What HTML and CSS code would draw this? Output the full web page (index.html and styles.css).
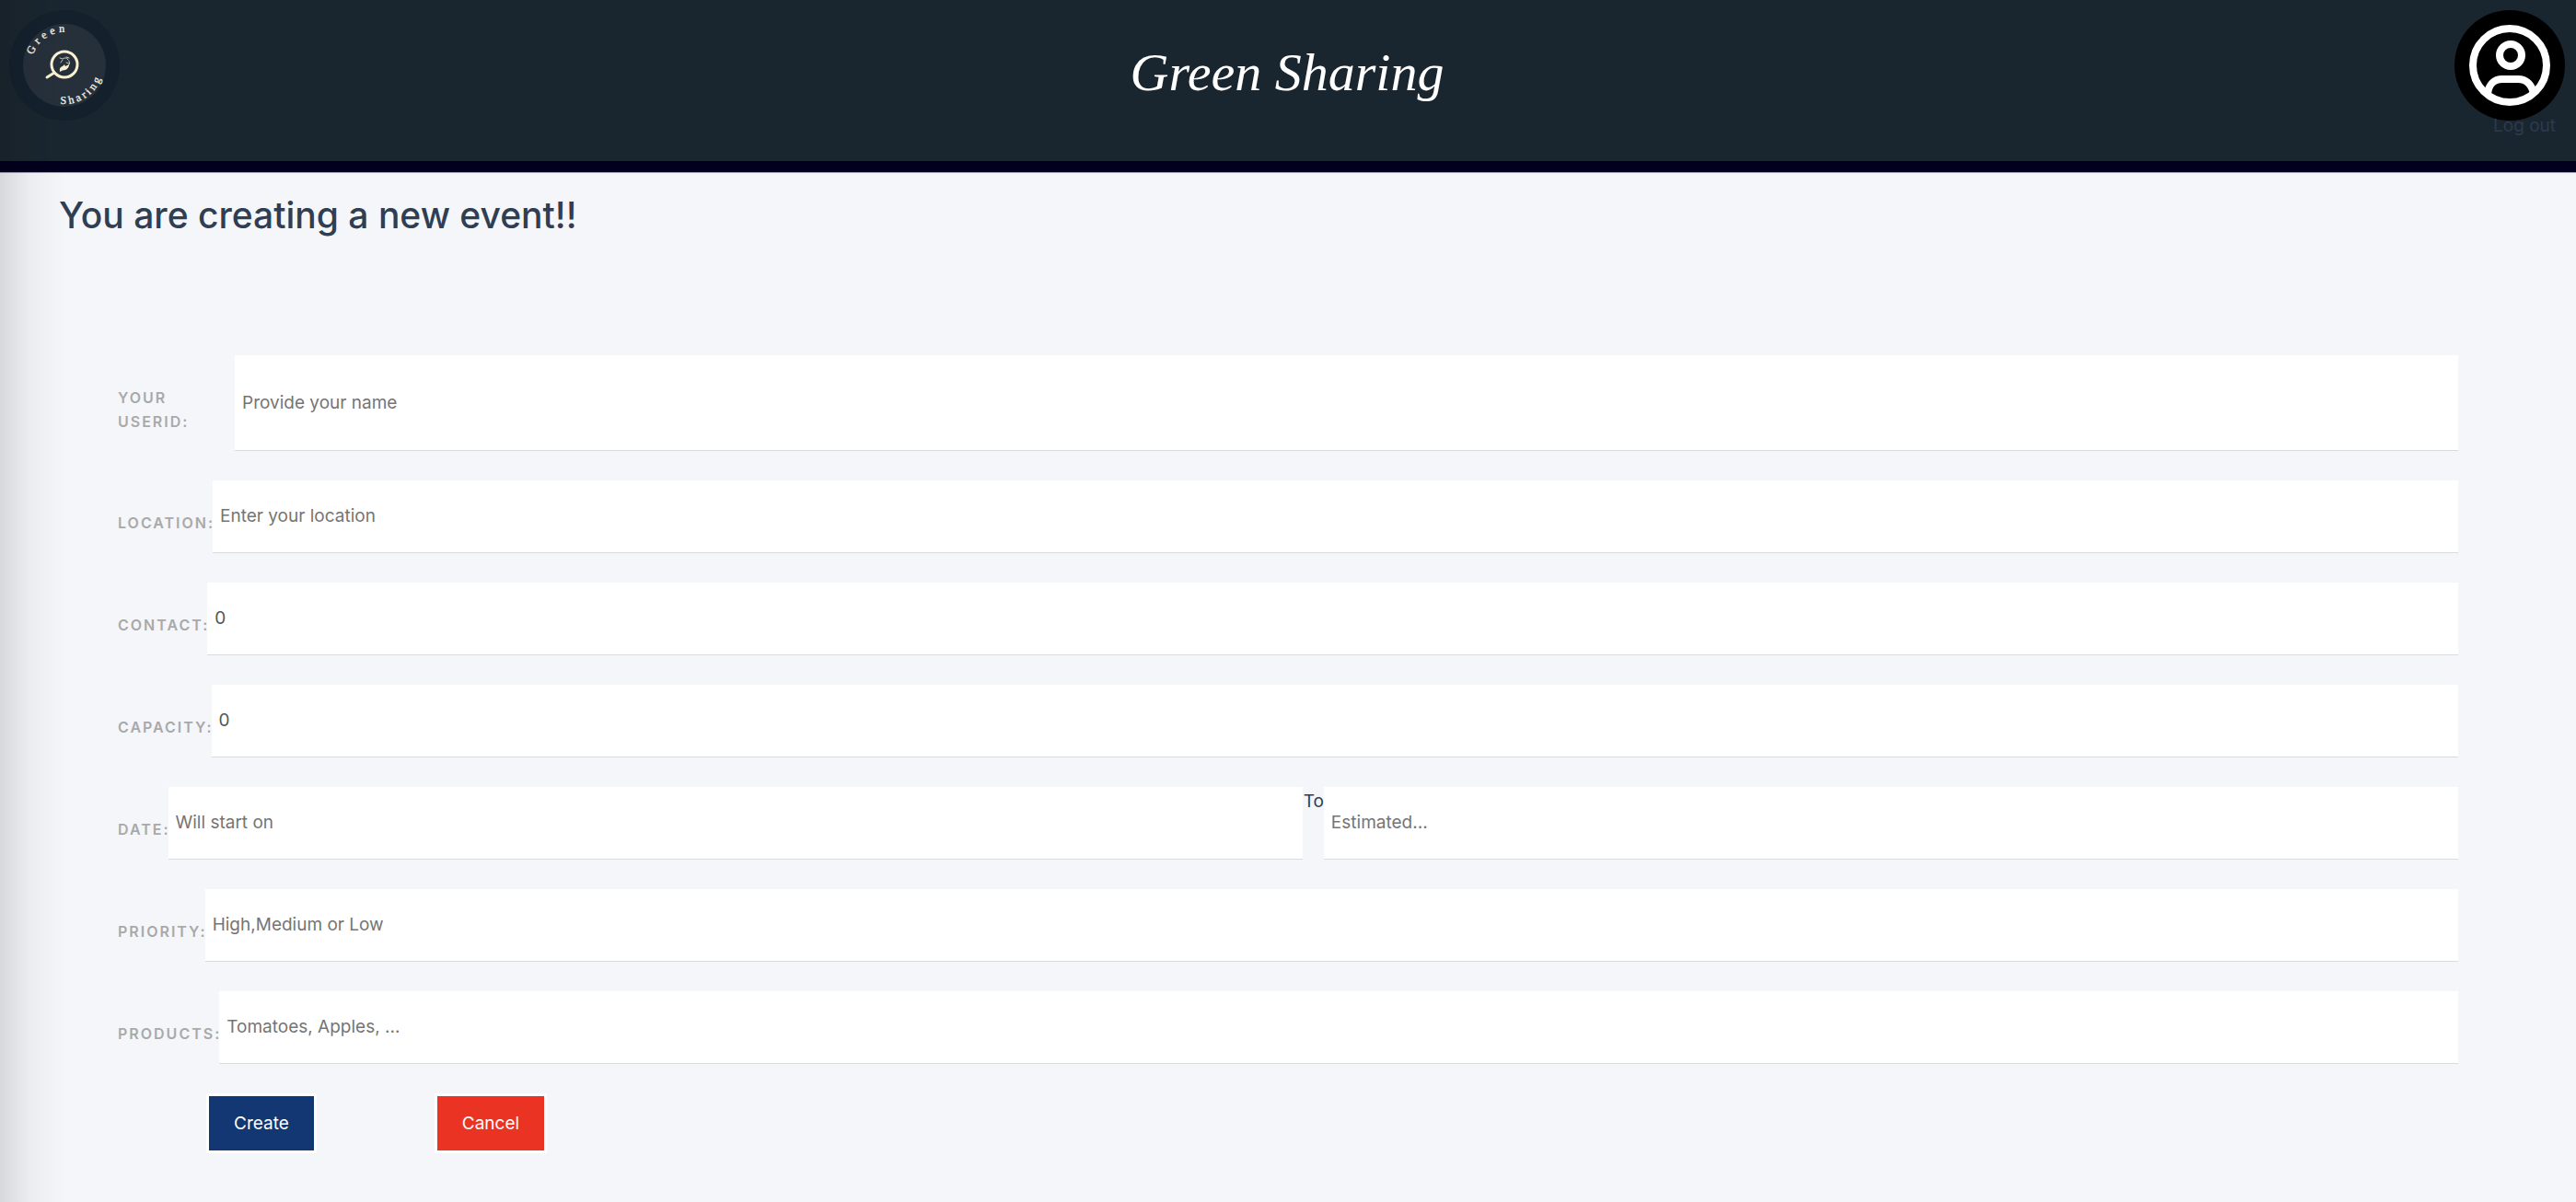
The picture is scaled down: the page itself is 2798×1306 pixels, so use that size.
FILE: index.html
```html
<!DOCTYPE html>
<html lang="en">
<head>
<meta charset="utf-8">
<meta name="viewport" content="width=device-width, initial-scale=1">
<title>Green Sharing</title>
<link rel="stylesheet" href="styles.css">
</head>
<body>
<header class="topbar">
  <a class="logo" href="#" aria-label="Green Sharing home">
    <svg viewBox="0 0 120 120" width="120" height="120">
      <defs>
        <path id="arc-top" d="M25.8 48.9A36 36 0 0 1 90 40"/>
        <path id="arc-bottom" d="M55.6 101.8A42 42 0 0 0 102 57"/>
      </defs>
      <circle cx="60" cy="60" r="60" fill="#14212d"/>
      <circle cx="60" cy="60" r="45" fill="#26303b"/>
      <text class="logo-text"><textPath href="#arc-top">Green</textPath></text>
      <text class="logo-text logo-text-low"><textPath href="#arc-bottom">Sharing</textPath></text>
      <g fill="none" stroke="#f9f1cf" stroke-linecap="round">
        <circle cx="60" cy="59" r="14" stroke-width="3"/>
        <path d="M49 68L41 73" stroke-width="3"/>
        <path d="M55 52q3 2 5 0q3-1 4 2M58 54l-2 3M62 51l3 1M65 55q2 3-1 6M62 57l3 1" stroke-width="1" opacity=".75"/>
      </g>
      <path d="M55 67q-1-5 3-6l2-2 1 2 4-2q0 4-4 6-3 0-6 2z" fill="#f9f1cf"/>
    </svg>
  </a>
  <h1 class="brand">Green Sharing</h1>
  <div class="account">
    <svg class="avatar" viewBox="0 0 120 120" width="120" height="120" aria-hidden="true">
      <circle cx="60" cy="60" r="60" fill="#000"/>
      <g fill="none" stroke="#fff" stroke-width="8">
        <circle cx="60" cy="60" r="40"/>
        <circle cx="61" cy="49" r="12"/>
        <path d="M36 91C37 81 43 75 52 75H69C78 75 84 81 86 91"/>
      </g>
    </svg>
    <a class="logout" href="#">Log out</a>
  </div>
</header>
<main class="page">
  <h2 class="title">You are creating a new event!!</h2>
  <form class="form">
    <div class="row">
      <label class="label label-wide" for="user">Your<br>UserID:</label>
      <input class="field" id="user" type="text" placeholder="Provide your name">
    </div>
    <div class="row">
      <label class="label" for="location">Location:</label>
      <input class="field" id="location" type="text" placeholder="Enter your location">
    </div>
    <div class="row">
      <label class="label" for="contact">Contact:</label>
      <input class="field" id="contact" type="text" value="0">
    </div>
    <div class="row">
      <label class="label" for="capacity">Capacity:</label>
      <input class="field" id="capacity" type="text" value="0">
    </div>
    <div class="row">
      <label class="label" for="start">Date:</label>
      <input class="field" id="start" type="text" placeholder="Will start on">
      <label class="to" for="end">To</label>
      <input class="field" id="end" type="text" placeholder="Estimated...">
    </div>
    <div class="row">
      <label class="label" for="priority">Priority:</label>
      <input class="field" id="priority" type="text" placeholder="High,Medium or Low">
    </div>
    <div class="row">
      <label class="label" for="products">Products:</label>
      <input class="field" id="products" type="text" placeholder="Tomatoes, Apples, ...">
    </div>
    <div class="actions">
      <button class="button create" type="submit">Create</button>
      <button class="button cancel" type="button">Cancel</button>
    </div>
  </form>
</main>
</body>
</html>
```
FILE: styles.css
```css
* {
  box-sizing: border-box;
}

body {
  margin: 0;
  min-height: 100vh;
  position: relative;
  background: #f4f6fa;
  color: #2f3e52;
  font-family: Inter, "Liberation Sans", sans-serif;
  font-size: 19px;
  line-height: 32px;
}

/* soft shade along the left edge, over the header and the page */
body::before {
  content: "";
  position: absolute;
  inset: 0 auto 0 0;
  width: 72px;
  background: linear-gradient(to right, rgba(0, 0, 0, .12), rgba(0, 0, 0, .04) 32px, transparent);
  pointer-events: none;
}

.topbar {
  display: grid;
  grid-template-columns: 1fr auto 1fr;
  align-items: start;
  min-height: 187px;
  padding: 11px 12px 0 10px;
  background: #1a262f;
  border-bottom: 12px solid #00001e;
  box-shadow: 0 1px #a3a3b8;
}

.logo {
  display: block;
  width: 120px;
  height: 120px;
}

.logo-text {
  fill: #f5f3e6;
  stroke: #f5f3e6;
  stroke-width: .3px;
  font-family: "Liberation Serif", serif;
  font-size: 12px;
  letter-spacing: 4px;
}

.logo-text-low {
  letter-spacing: 3px;
}

.brand {
  margin: 28px 0 0;
  color: #fff;
  font: italic 400 58px/80px "Apple Chancery", "Liberation Serif", serif;
}

.account {
  display: flex;
  flex-direction: column;
  align-items: flex-end;
}

.avatar {
  display: block;
}

.logout {
  margin: -10px 10px 0 0;
  color: #2c3a4c;
  text-decoration: none;
}

.page {
  padding: 19px 128px 48px;
}

.title {
  margin: 0 0 124px -64px;
  font-size: 39px;
  font-weight: 500;
  line-height: 56px;
}

.form {
  display: flex;
  flex-direction: column;
  gap: 32px;
}

.row {
  display: flex;
  min-height: 79px;
}

.label {
  margin-right: -2px;
  padding: 33px 0 19px;
  color: #a9a9a9;
  font-size: 16px;
  font-weight: 600;
  line-height: 26px;
  letter-spacing: 2px;
  text-transform: uppercase;
}

.label-wide {
  width: 129px;
}

.field {
  flex: 1;
  min-width: 0;
  padding: 0 8px;
  border: 0;
  border-bottom: 1px solid #d9dbdd;
  border-radius: 0;
  background: #fff;
  color: #555;
  font: inherit;
}

.field::placeholder {
  color: #757575;
  opacity: 1;
}

.to {
  padding-left: 1px;
}

.actions {
  display: flex;
  gap: 128px;
  padding-left: 96px;
}

.button {
  height: 65px;
  padding: 0 27px;
  border: 3px solid #fff;
  color: #fff;
  font: inherit;
}

.create {
  background: #123772;
}

.cancel {
  background: #ea3323;
}
```
